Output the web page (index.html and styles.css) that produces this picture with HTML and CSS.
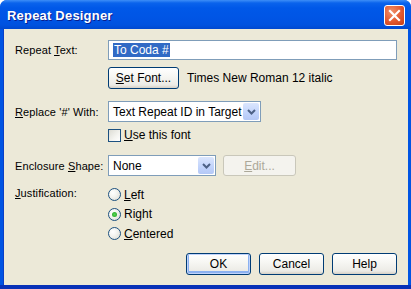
FILE: index.html
```html
<!DOCTYPE html>
<html lang="en">
<head>
  <meta charset="UTF-8" />
  <title>Repeat Designer</title>
  <link rel="stylesheet" href="styles.css">
</head>
<body>

  <div class="window">
    <!-- Title bar -->
    <div class="titlebar">
      <span class="title">Repeat Designer</span>
      <div class="close">
        <svg width="13" height="13" viewBox="0 0 13 13">
          <path d="M2 2 L11 11 M11 2 L2 11" stroke="#fff" stroke-width="2.2" stroke-linecap="square"/>
        </svg>
      </div>
    </div>

    <div class="client">
      <div class="form">
        <label class="lbl r1">Repeat <u>T</u>ext:</label>
        <div class="textbox r1"><span class="sel">To Coda #</span></div>

        <div class="fontrow r2">
          <button class="btn setfont"><u>S</u>et Font...</button>
          <span class="fontname">Times New Roman 12 italic</span>
        </div>

        <label class="lbl r3"><u>R</u>eplace '#' With:</label>
        <div class="combo wide r3">
          <span class="val">Text Repeat ID in Target</span>
          <span class="drop"><svg width="9" height="6" viewBox="0 0 9 6"><path d="M1 1 L4.5 4.5 L8 1" stroke="#4d6185" stroke-width="2" fill="none"/></svg></span>
        </div>

        <div class="check r4">
          <span class="box"></span>
          <span><u>U</u>se this font</span>
        </div>

        <label class="lbl r5">Enclosure <u>S</u>hape:</label>
        <div class="shaperow r5">
          <div class="combo narrow">
            <span class="val">None</span>
            <span class="drop"><svg width="9" height="6" viewBox="0 0 9 6"><path d="M1 1 L4.5 4.5 L8 1" stroke="#4d6185" stroke-width="2" fill="none"/></svg></span>
          </div>
          <button class="btn disabled"><u>E</u>dit...</button>
        </div>

        <label class="lbl r6"><u>J</u>ustification:</label>
        <div class="radios r6">
          <div class="radio"><span class="dot"></span><span><u>L</u>eft</span></div>
          <div class="radio on"><span class="dot"></span><span>Ri<u>g</u>ht</span></div>
          <div class="radio"><span class="dot"></span><span><u>C</u>entered</span></div>
        </div>
      </div>

      <div class="buttons">
        <button class="btn default">OK</button>
        <button class="btn">Cancel</button>
        <button class="btn">Help</button>
      </div>
    </div>
  </div>

</body>
</html>
```

FILE: styles.css
```css
body {
  margin: 0;
  padding: 0;
  background: #ffffff;
  font-family: 'Liberation Sans', Arial, sans-serif;
  font-size: 12px;
  color: #000;
}

.window {
  width: 411px;
  height: 289px;
  display: flex;
  flex-direction: column;
  background: #0054e3;
  border-radius: 7px 7px 0 0;
  overflow: hidden;
  box-shadow: inset 0 -4px 0 #0831b7;
}

.titlebar {
  height: 29px;
  flex: none;
  display: flex;
  align-items: center;
  justify-content: space-between;
  padding: 0 6px 0 7px;
  background: linear-gradient(to bottom, #3d8ef7 0px, #0a63ec 3px, #0058e8 8px, #0055e5 18px, #0052df 25px, #0048cf 29px);
}

.title {
  color: #fff;
  font-family: 'Liberation Sans', Arial, sans-serif;
  font-weight: bold;
  font-size: 13px;
  letter-spacing: 0.2px;
  text-shadow: 1px 1px 0 #0a1e8c;
  padding-top: 1px;
}

.close {
  width: 19px;
  height: 19px;
  border: 1px solid #fff;
  border-radius: 3px;
  background: radial-gradient(circle at 35% 30%, #f0906a 0%, #e2582f 55%, #c43d15 100%);
  display: flex;
  align-items: center;
  justify-content: center;
  margin-top: 2px;
}

.client {
  flex: 1;
  margin: 0 3px 4px 3px;
  background: #ece9d8;
  display: flex;
  flex-direction: column;
  padding: 11px 11px 0 11px;
  border-left: 1px solid #0a3fc7;
}

.form {
  display: grid;
  grid-template-columns: 93px 1fr;
  align-items: center;
}

.lbl {
  grid-column: 1;
  white-space: nowrap;
  font-size: 11px;
  letter-spacing: 0.1px;
}

.r1 { grid-row: 1; }
.r2 { grid-row: 2; grid-column: 2; margin-top: 7px; }
.r3 { grid-row: 3; margin-top: 12px; }
.r4 { grid-row: 4; grid-column: 2; margin-top: 6px; }
.r5 { grid-row: 5; margin-top: 13px; }
.r6 { grid-row: 6; margin-top: 12px; align-self: start; }
.lbl.r6 { margin-top: 11px; }

.textbox {
  grid-column: 2;
  height: 20px;
  box-sizing: border-box;
  border: 1px solid #7f9db9;
  background: #fff;
  display: flex;
  align-items: center;
  padding-left: 4px;
}

.sel {
  background: #316ac5;
  color: #fff;
  line-height: 14px;
  padding: 0 1px;
}

.fontrow {
  display: flex;
  align-items: center;
  gap: 8px;
}

.btn {
  font-family: 'Liberation Sans', Arial, sans-serif;
  font-size: 12px;
  color: #000;
  height: 22px;
  box-sizing: border-box;
  border: 1px solid #003c74;
  border-radius: 3px;
  background: linear-gradient(to bottom, #ffffff 0%, #f7f7f3 40%, #ecebe6 85%, #d6d0c5 100%);
  padding: 0;
  cursor: default;
}

.setfont {
  width: 71px;
}

.combo {
  grid-column: 2;
  height: 21px;
  box-sizing: border-box;
  border: 1px solid #7f9db9;
  background: #fff;
  display: flex;
  align-items: center;
  justify-content: space-between;
  padding: 1px;
}

.combo.wide { width: 153px; }
.combo.narrow { width: 108px; }

.val {
  padding-left: 3px;
}

.drop {
  width: 16px;
  height: 17px;
  border-radius: 2px;
  background: linear-gradient(to bottom, #dbe6fd 0%, #c1d3fb 60%, #b4c8f6 100%);
  display: flex;
  align-items: center;
  justify-content: center;
}

.check {
  display: flex;
  align-items: center;
  gap: 3px;
}

.box {
  width: 11px;
  height: 11px;
  border: 1px solid #1c5180;
  background: linear-gradient(135deg, #dcdcd4 0%, #f4f4f0 60%, #fff 100%);
}

.shaperow {
  grid-column: 2;
  display: flex;
  align-items: center;
  gap: 7px;
}

.btn.disabled {
  width: 73px;
  height: 21px;
  border-color: #c9c7ba;
  background: #f4f3ee;
  color: #aca899;
}

.radios {
  grid-column: 2;
  display: flex;
  flex-direction: column;
  gap: 6.5px;
}

.radio {
  display: flex;
  align-items: center;
  gap: 3px;
  height: 13px;
}

.dot {
  width: 11px;
  height: 11px;
  border: 1px solid #1c5180;
  border-radius: 50%;
  background: radial-gradient(circle at 35% 35%, #fff 0%, #f4f4f0 40%, #d8d8d0 100%);
  display: flex;
  align-items: center;
  justify-content: center;
}

.radio.on .dot::after {
  content: '';
  width: 5px;
  height: 5px;
  border-radius: 50%;
  background: radial-gradient(circle, #55d451 0%, #21a121 100%);
}

.buttons {
  margin-top: auto;
  margin-bottom: 10px;
  display: flex;
  justify-content: flex-end;
  gap: 8px;
}

.buttons .btn {
  width: 65px;
  height: 22px;
}

.btn.default {
  box-shadow: inset 0 0 0 1px #c0d3fb, inset 0 -1px 0 2px #8bb1f0;
}
```
